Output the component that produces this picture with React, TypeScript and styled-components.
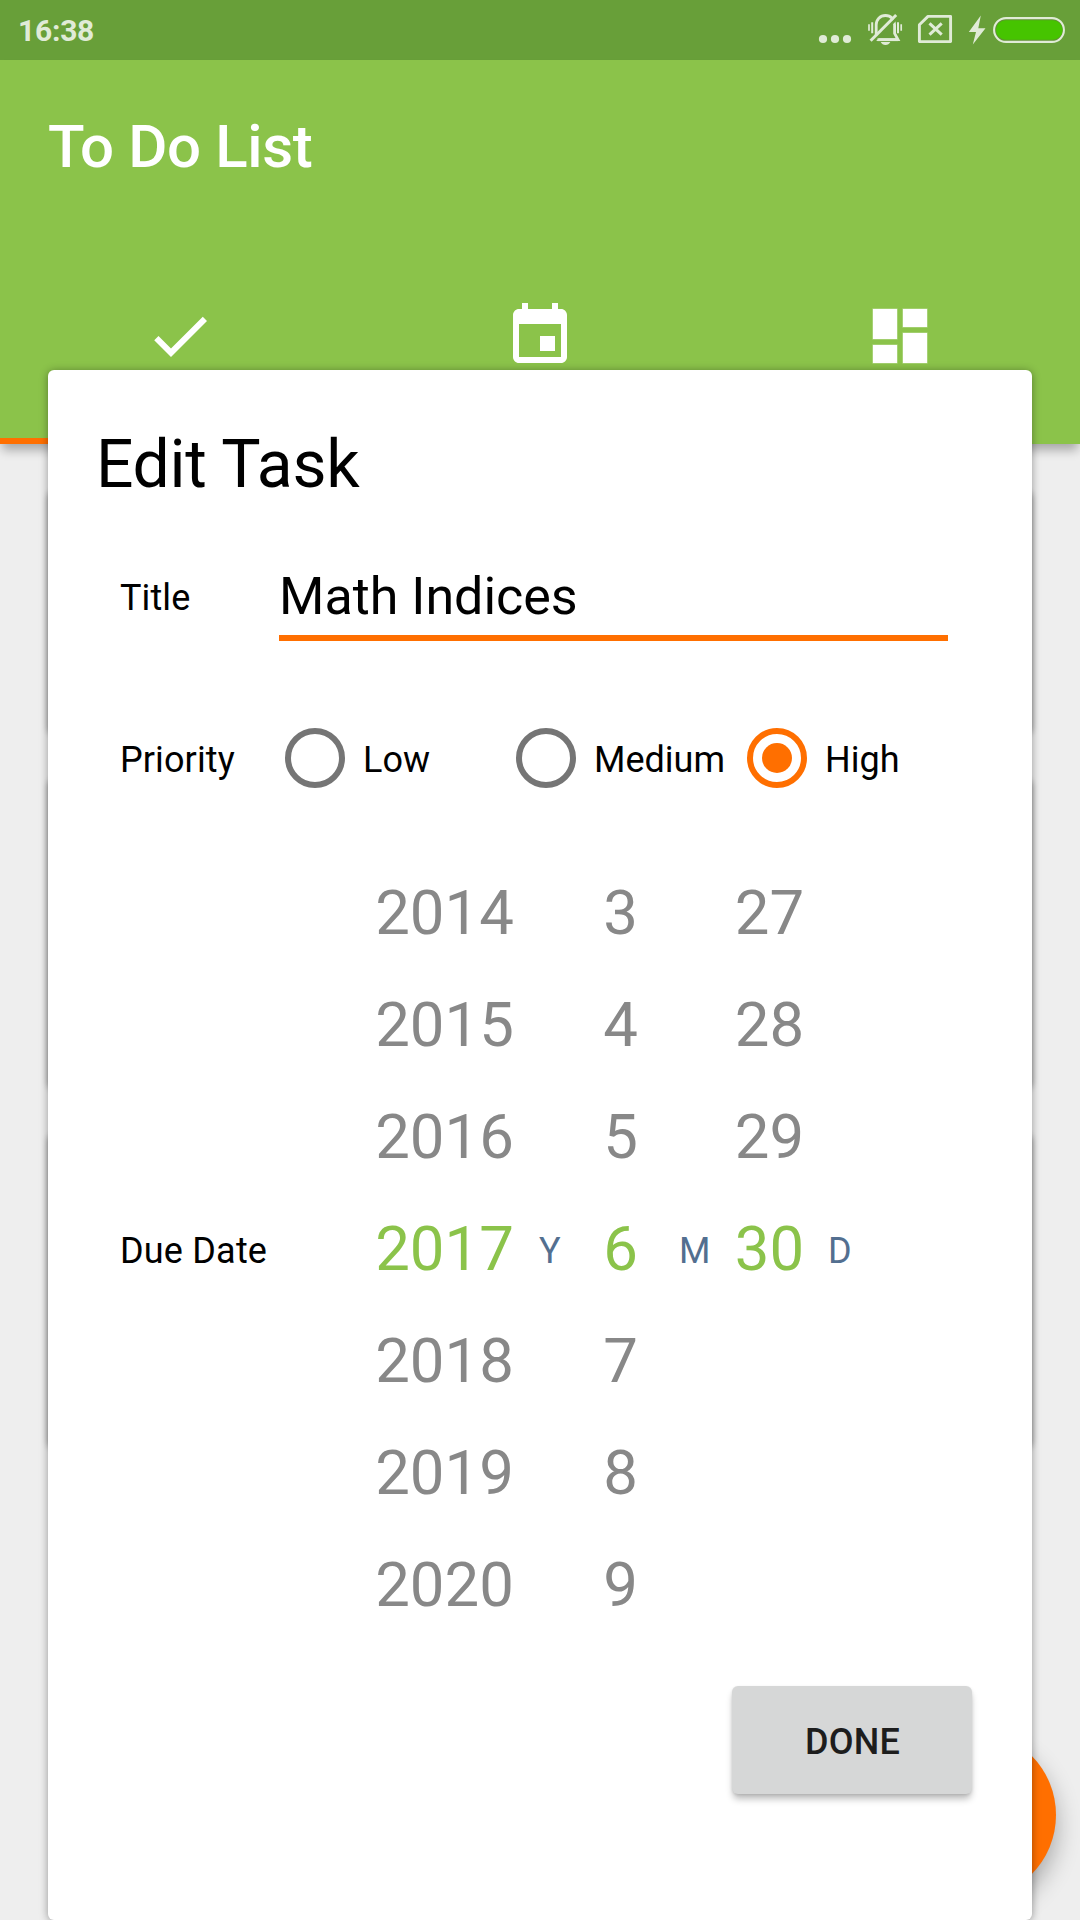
import React from "react";
import styled, { createGlobalStyle } from "styled-components";

const GlobalStyle = createGlobalStyle`
  * { box-sizing: border-box; }
  body {
    margin: 0;
    background: #eee;
    font-family: Roboto, "Noto Sans", sans-serif;
    color: #000;
  }
`;

const Screen = styled.div`
  position: relative;
  width: 1080px;
  height: 1920px;
  overflow: hidden;
  background: #eee;
`;

const StatusBar = styled.div`
  display: flex;
  align-items: center;
  justify-content: space-between;
  height: 60px;
  padding: 0 15px 0 18px;
  background: #689f39;
`;

const Clock = styled.span`
  padding-top: 1px;
  font-size: 30px;
  font-weight: 700;
  line-height: 60px;
  letter-spacing: -0.25px;
  color: #e0ebd7;
`;

const StatusIcons = styled.svg`
  display: block;
  width: 250px;
  height: 60px;
`;

const Header = styled.header`
  position: relative;
  height: 384px;
  display: flex;
  flex-direction: column;
  justify-content: space-between;
  background: #8bc34a;
  box-shadow: 0 8px 10px -2px rgba(0, 0, 0, 0.3);
`;

const AppTitle = styled.h1`
  margin: 0;
  padding: 47px 0 0 48px;
  font-size: 60px;
  font-weight: 500;
  line-height: 80px;
  letter-spacing: -0.38px;
  color: #fff;
`;

const Tabs = styled.nav`
  display: grid;
  grid-template-columns: repeat(3, 1fr);
  height: 144px;
`;

const Tab = styled.div<{ $active?: boolean }>`
  display: flex;
  justify-content: center;
  align-items: flex-start;
  border-bottom: 6px solid ${(p) => (p.$active ? "#ff6f00" : "transparent")};
`;

const TabIcon = styled.svg`
  width: 72px;
  height: 72px;
  fill: #fff;
`;

const TaskList = styled.div`
  display: flex;
  flex-direction: column;
  gap: 46px;
  padding: 46px 48px 0;
`;

const TaskCard = styled.div<{ $height: number }>`
  height: ${(p) => p.$height}px;
  border-radius: 6px;
  background: #fff;
  box-shadow: 0 2px 6px rgba(0, 0, 0, 0.4);
`;

const Fab = styled.div`
  position: absolute;
  right: 24px;
  bottom: 21px;
  width: 168px;
  height: 168px;
  border-radius: 50%;
  background: #ff6f00;
  box-shadow: 0 12px 24px rgba(0, 0, 0, 0.3);
`;

const Dialog = styled.section`
  position: absolute;
  top: 370px;
  left: 48px;
  width: 984px;
  height: 1550px;
  padding: 56px 60px 0 72px;
  display: flex;
  flex-direction: column;
  border-radius: 6px;
  background: #fff;
  box-shadow: 0 1px 9px rgba(0, 0, 0, 0.38);
`;

const DialogTitle = styled.h2`
  margin: 0 0 0 -24px;
  font-size: 66px;
  font-weight: 400;
  line-height: 78px;
  letter-spacing: -0.3px;
`;

const FieldLabel = styled.div<{ $width: number; $line: number }>`
  flex: none;
  width: ${(p) => p.$width}px;
  font-size: 36px;
  line-height: ${(p) => p.$line}px;
  letter-spacing: 0.1px;
`;

const TitleRow = styled.div`
  display: flex;
  margin-top: 52px;
  height: 85px;
`;

const TitleInput = styled.div`
  width: 669px;
  border-bottom: 6px solid #ff6f00;
  font-size: 52px;
  line-height: 81px;
`;

const PriorityRow = styled.div`
  display: flex;
  margin-top: 87px;
  height: 60px;
`;

const RadioOption = styled.div`
  flex: none;
  display: flex;
  align-items: flex-start;
  width: 231px;
  gap: 18px;
  font-size: 36px;
  line-height: 64px;
`;

const RadioRing = styled.span<{ $checked?: boolean }>`
  flex: none;
  display: flex;
  align-items: center;
  justify-content: center;
  width: 60px;
  height: 60px;
  border: 6px solid ${(p) => (p.$checked ? "#ff6f00" : "#757575")};
  border-radius: 50%;
`;

const RadioDot = styled.span`
  width: 30px;
  height: 30px;
  border-radius: 50%;
  background: #ff6f00;
`;

const DateRow = styled.div`
  display: flex;
  align-items: center;
  margin-top: 69px;
`;

const DateLabel = styled(FieldLabel)`
  padding-top: 4px;
  letter-spacing: 0.2px;
`;

const Pickers = styled.div`
  display: grid;
  grid-template-columns: 189px 23px 117px 32px 117px auto;
  align-items: center;
`;

const Wheel = styled.div`
  display: flex;
  flex-direction: column;
  height: 784px;
`;

const WheelItem = styled.div<{ $selected?: boolean }>`
  font-size: 61.7px;
  line-height: 112px;
  text-align: center;
  color: ${(p) => (p.$selected ? "#8bc34a" : "#888")};
`;

const Unit = styled.span`
  padding-top: 4px;
  font-size: 36px;
  line-height: 42px;
  color: #536f90;
`;

const Actions = styled.div`
  display: flex;
  justify-content: flex-end;
  margin-top: 45px;
`;

const DoneButton = styled.button`
  width: 240px;
  height: 108px;
  padding: 3px 0 0 1px;
  border: 0;
  border-radius: 6px;
  background: #d6d7d7;
  box-shadow: 0 6px 7px -1px rgba(0, 0, 0, 0.26), 0 1px 3px rgba(0, 0, 0, 0.1);
  font: 500 36px/42px Roboto, sans-serif;
  letter-spacing: 0.2px;
  color: #1d1d1d;
`;

const wheels = [
  { unit: "Y", values: ["2014", "2015", "2016", "2017", "2018", "2019", "2020"] },
  { unit: "M", values: ["3", "4", "5", "6", "7", "8", "9"] },
  { unit: "D", values: ["27", "28", "29", "30"] },
];
const SELECTED_INDEX = 3;

const priorities = ["Low", "Medium", "High"];
const cardHeights = [242, 309, 313];

function StatusGlyphs() {
  const c = "#e0ebd7";
  return (
    <StatusIcons viewBox="815 0 250 60">
      <g fill={c}>
        <circle cx="823" cy="39" r="4.1" />
        <circle cx="835" cy="39" r="4.1" />
        <circle cx="847" cy="39" r="4.1" />
      </g>
      <g transform="translate(868 14)" fill="none" stroke={c} strokeWidth="2.8">
        <path d="M8.2 22V11C8.2 5.500 12 1.500 17.500 1.500S26.600 5.500 26.600 11V19.500L30 25.700H8" />
        <path d="M4.800 28.300L30.600 2.400" stroke="#689f39" strokeWidth="3" />
        <path d="M2.600 26.700L28.200 1" strokeWidth="3" />
        <path d="M1 10.300v6.500M33.200 10.300v6.500" strokeWidth="1.700" />
        <path d="M4.200 8.300v11M30 8.300v11" strokeWidth="2" />
        <path d="M9.500 25.700H30" />
        <path d="M12.700 28h9.600q-1.500 3-4.800 3t-4.800-3z" fill={c} stroke="none" />
      </g>
      <path
        d="M928 16.400H950.600V41.600H919.400V24.800Z"
        fill="none"
        stroke={c}
        strokeWidth="2.900"
        strokeLinejoin="round"
      />
      <path d="M929.500 23.300L941.700 34.700M941.700 23.300L929.500 34.700" stroke={c} strokeWidth="3" />
      <path d="M980.800 15.500L968.800 32H976L972.800 44.500L985.500 28.300H978.300Z" fill={c} />
      <rect x="994.100" y="18.100" width="69.800" height="23.800" rx="11.900" fill="#5f9132" stroke={c} strokeWidth="2.100" />
      <rect x="996" y="20.300" width="66.500" height="19.400" rx="9.700" fill="#46c400" />
    </StatusIcons>
  );
}

export default function App() {
  return (
    <Screen>
      <GlobalStyle />
      <StatusBar>
        <Clock>16:38</Clock>
        <StatusGlyphs />
      </StatusBar>
      <Header>
        <AppTitle>To Do List</AppTitle>
        <Tabs>
          <Tab $active>
            <TabIcon viewBox="0 0 24 24">
              <path d="M9 16.170L4.830 12l-1.420 1.410L9 19 21 7l-1.410-1.410z" />
            </TabIcon>
          </Tab>
          <Tab>
            <TabIcon viewBox="0 0 24 24">
              <path d="M17 12h-5v5h5v-5zM16 1v2H8V1H6v2H5c-1.110 0-1.990.9-1.990 2L3 19c0 1.100.890 2 2 2h14c1.100 0 2-.9 2-2V5c0-1.100-.9-2-2-2h-1V1h-2zm3 18H5V8h14v11z" />
            </TabIcon>
          </Tab>
          <Tab>
            <TabIcon viewBox="0 0 24 24">
              <path
                d="M3 13h8V3H3v10zm0 8h8v-6H3v6zm10 0h8V11h-8v10zm0-18v6h8V3h-8z"
                stroke="#fff"
                strokeOpacity="0.4"
                strokeWidth="0.4"
              />
            </TabIcon>
          </Tab>
        </Tabs>
      </Header>
      <TaskList>
        {cardHeights.map((h) => (
          <TaskCard key={h} $height={h} />
        ))}
      </TaskList>
      <Fab />
      <Dialog>
        <DialogTitle>Edit Task</DialogTitle>
        <TitleRow>
          <FieldLabel $width={159} $line={84}>Title</FieldLabel>
          <TitleInput>Math Indices</TitleInput>
        </TitleRow>
        <PriorityRow>
          <FieldLabel $width={165} $line={64}>Priority</FieldLabel>
          {priorities.map((name) => {
            const checked = name === "High";
            return (
              <RadioOption key={name}>
                <RadioRing $checked={checked}>{checked && <RadioDot />}</RadioRing>
                {name}
              </RadioOption>
            );
          })}
        </PriorityRow>
        <DateRow>
          <DateLabel $width={230} $line={42}>Due Date</DateLabel>
          <Pickers>
            {wheels.map((wheel) => (
              <React.Fragment key={wheel.unit}>
                <Wheel>
                  {wheel.values.map((value, i) => (
                    <WheelItem key={value} $selected={i === SELECTED_INDEX}>
                      {value}
                    </WheelItem>
                  ))}
                </Wheel>
                <Unit>{wheel.unit}</Unit>
              </React.Fragment>
            ))}
          </Pickers>
        </DateRow>
        <Actions>
          <DoneButton>DONE</DoneButton>
        </Actions>
      </Dialog>
    </Screen>
  );
}
